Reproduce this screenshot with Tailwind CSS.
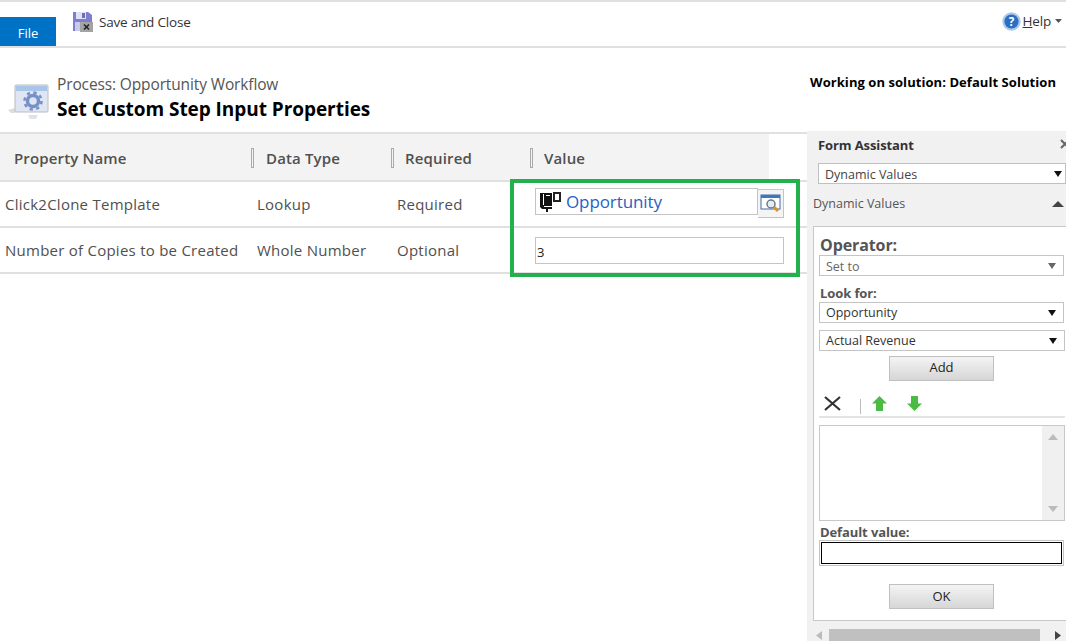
<!DOCTYPE html>
<html>
<head>
<meta charset="utf-8">
<script src="https://cdn.jsdelivr.net/npm/@tailwindcss/browser@4"></script>
</head>
<body class="bg-white">
<div class="relative w-[1066px] h-[641px] overflow-hidden flex flex-col bg-white font-['Open_Sans',sans-serif] text-[#444]">
  <!-- Ribbon -->
  <header class="h-[48px] shrink-0 border-t-2 border-b-2 border-[#e0e0e0] flex items-start relative">
    <div class="mt-[15px] w-[56px] h-[29px] pt-[5px] bg-[#0072c6] text-white text-[13px] flex items-center justify-center">File</div>
    <div class="ml-[17px] mt-[10px] flex items-center gap-[6px]">
      <svg width="20" height="20" viewBox="0 0 20 20"><path d="M0 0h15l4 3v8H9v8H0z" fill="#7f7dd0"/><rect x="3" y="0" width="10" height="7" fill="#dfe2f4"/><rect x="9" y="1" width="3" height="5" fill="#6f6db8"/><rect x="2" y="10" width="7" height="9" fill="#c9c9ea"/><rect x="7" y="10" width="13" height="10" fill="#a3a3a3"/><path d="M11 12.500l5 5m0-5l-5 5" stroke="#222" stroke-width="1.600"/></svg>
      <span class="text-[13.500px] leading-[20px] text-[#333] -mt-[1px] tracking-[-0.2px]">Save and Close</span>
    </div>
    <div class="ml-auto mt-[9px] mr-[4px] flex items-center">
      <svg width="19" height="19" viewBox="0 0 18 18"><circle cx="9" cy="9" r="8.700" fill="#a9c8ea"/><circle cx="9" cy="9" r="6.700" fill="#2a6fc4"/><text x="9" y="13" text-anchor="middle" font-size="11" font-weight="700" fill="#fff" font-family="Open Sans">?</text></svg>
      <span class="ml-[2px] text-[13.500px] leading-[20px] text-[#333] tracking-[-0.2px]"><span class="underline">H</span>elp</span>
      <svg class="ml-[4px]" width="7" height="4" viewBox="0 0 7 4"><path d="M0 0h7L3.500 4z" fill="#555"/></svg>
    </div>
  </header>

  <!-- Page title -->
  <section class="h-[84px] shrink-0 flex items-start relative">
    <svg class="ml-[8px] mt-[36px] shrink-0" width="42" height="36" viewBox="0 0 42 36">
      <path d="M0 26l7-2v5l-4 0z" fill="#ddd"/>
      <rect x="7" y="1" width="33" height="27" rx="1" fill="#dfe5f3" stroke="#b9bcc4"/>
      <rect x="8" y="2" width="31" height="5" fill="#a9c6e8"/>
      <circle cx="25" cy="17" r="5.500" fill="none" stroke="#7690c8" stroke-width="3.500"/>
      <circle cx="25" cy="17" r="8.500" fill="none" stroke="#7690c8" stroke-width="2.500" stroke-dasharray="3.300 3.400"/>
      <path d="M20 31h10l-2 4h-6z" fill="#dde2ee"/>
    </svg>
    <div class="ml-[7px] mt-[25px] flex flex-col">
      <span class="text-[15.500px] leading-[22px] text-[#555] tracking-[-0.13px]">Process: Opportunity Workflow</span>
      <span class="text-[19px] leading-[26px] mt-[1px] font-bold text-black tracking-[-0.05px]">Set Custom Step Input Properties</span>
    </div>
    <span class="ml-auto mr-[10px] mt-[24px] text-[13px] leading-[20px] font-bold text-black tracking-[0.06px]">Working on solution: Default Solution</span>
  </section>

  <!-- Main -->
  <main class="flex-1 flex min-h-0">
    <section class="w-[807px] shrink-0 relative">
      <div class="h-[50px] border-t-2 border-b-2 border-[#e0e0e0]">
        <div class="w-[769px] h-full pt-[2px] bg-[#f3f3f3] grid grid-cols-[251px_140px_139px_239px] items-center text-[15px] font-semibold text-[#505050] tracking-[0.15px]">
          <div class="pl-[14px]">Property Name</div>
          <div class="flex items-center"><i class="block w-[3px] h-[20px] border border-[#aaa] mr-[12px]"></i>Data Type</div>
          <div class="flex items-center"><i class="block w-[3px] h-[20px] border border-[#aaa] mr-[11px]"></i>Required</div>
          <div class="flex items-center"><i class="block w-[3px] h-[20px] border border-[#aaa] mr-[11px]"></i>Value</div>
        </div>
      </div>
      <div class="h-[46px] border-b-2 border-[#e0e0e0] grid grid-cols-[251px_140px_139px_277px] items-center text-[15px] text-[#505050] tracking-[0.25px]">
        <div class="pl-[5px]">Click2Clone Template</div>
        <div class="pl-[6px]">Lookup</div>
        <div class="pl-[6px]">Required</div>
        <div class="pl-[5px] self-start pt-[6px] flex items-start tracking-normal">
          <div class="w-[223px] h-[27px] border border-[#c4c4c4] flex items-center pl-[4px] gap-[5px]">
            <svg width="21" height="20" viewBox="0 0 21 20" class="shrink-0"><path d="M0 1h12v13H4v1h8v2H8v3H6v-3H2l-2-2z" fill="#111"/><rect x="3" y="2" width="1" height="11" fill="#fff"/><rect x="6" y="3" width="4" height="1" fill="#fff"/><rect x="13" y="0" width="8" height="10" fill="#222"/><rect x="15" y="2" width="4" height="6" fill="#fff"/></svg>
            <span class="text-[17px] leading-[24px] text-[#1f62c4] tracking-[-0.1px] pt-[1px]">Opportunity</span>
          </div>
          <div class="w-[26px] h-[29px] mt-[1px] border-r border-b border-t border-[#c4c4c4] flex items-center justify-center bg-[#f4f4f4]">
            <svg width="21" height="21" viewBox="0 0 21 21"><rect x="1" y="2" width="19" height="14" fill="#fff" stroke="#3c6ea8"/><rect x="1" y="2" width="19" height="3" fill="#3c78c0"/><circle cx="11" cy="11" r="4" fill="#e4eef8" stroke="#6a7a8c" stroke-width="1.500"/><path d="M14 14l4 4" stroke="#d89030" stroke-width="3"/></svg>
          </div>
        </div>
      </div>
      <div class="h-[46px] border-b-2 border-[#e0e0e0] grid grid-cols-[251px_140px_139px_277px] items-center text-[15px] text-[#505050] tracking-[0.25px]">
        <div class="pl-[5px] whitespace-nowrap">Number of Copies to be Created</div>
        <div class="pl-[6px]">Whole Number</div>
        <div class="pl-[6px]">Optional</div>
        <div class="pl-[5px] self-start pt-[9px]">
          <div class="w-[249px] h-[27px] border border-[#c4c4c4] flex items-center text-[13px] text-[#222] pl-[1px] pt-[5px] tracking-normal">3</div>
        </div>
      </div>
      <div class="absolute left-[510px] top-[47px] w-[290px] h-[98px] border-4 border-[#22b14c]"></div>
    </section>

    <!-- Form assistant -->
    <aside class="flex-1 min-w-0 bg-[#f1f1f1] relative -mt-[1px] pl-[6px] overflow-hidden">
      <div class="h-[32px] pl-[5px] pb-[2px] flex items-center text-[13px] font-bold text-[#333] whitespace-nowrap tracking-[-0.1px]">Form Assistant
        <svg class="absolute left-[253px] top-[8px]" width="10" height="10" viewBox="0 0 10 10"><path d="M1 1l8 8M9 1L1 9" stroke="#666" stroke-width="2"/></svg>
      </div>
      <div class="ml-[5px] h-[21px] bg-white border border-[#c0c0c0] flex items-center justify-between pl-[6px] pr-[3px] text-[12.500px] text-[#444]">
        <span class="pt-[3px]">Dynamic Values</span>
        <svg width="8" height="8" viewBox="0 0 8 8"><path d="M0 1h8L4 7z" fill="#111"/></svg>
      </div>
      <div class="h-[41px] flex items-center justify-between pr-[2px] pb-[1px] text-[12.500px] text-[#555]">
        <span>Dynamic Values</span>
        <svg width="12" height="6" viewBox="0 0 12 6"><path d="M0 6h12L6 0z" fill="#444"/></svg>
      </div>
      <div class="h-[395px] bg-white border border-[#c8c8c8] border-r-0 pl-[5px] pt-[8px] mt-[1px] flex flex-col">
        <div class="pl-[1px] text-[16px] leading-[20px] font-bold text-[#555] tracking-[-0.1px]">Operator:</div>
        <div class="w-[245px] h-[21px] border border-[#c4c4c4] flex items-center justify-between pl-[6px] pr-[7px] text-[12.500px] text-[#666]">
          <span class="pt-[4px]">Set to</span>
          <svg width="8" height="8" viewBox="0 0 8 8"><path d="M0 1h8L4 7z" fill="#666"/></svg>
        </div>
        <div class="pl-[1px] mt-[9px] text-[13px] leading-[17px] font-bold text-[#555] tracking-[-0.1px]">Look for:</div>
        <div class="w-[245px] h-[21px] border border-[#c4c4c4] flex items-center justify-between pl-[6px] pr-[7px] text-[12.500px] text-[#333]">
          <span class="pt-[2px]">Opportunity</span>
          <svg width="8" height="8" viewBox="0 0 8 8"><path d="M0 1h8L4 7z" fill="#111"/></svg>
        </div>
        <div class="w-[246px] h-[21px] mt-[7px] border border-[#c4c4c4] flex items-center justify-between pl-[6px] pr-[7px] text-[12.500px] text-[#333]">
          <span class="pt-[2px]">Actual Revenue</span>
          <svg width="8" height="8" viewBox="0 0 8 8"><path d="M0 1h8L4 7z" fill="#111"/></svg>
        </div>
        <div class="ml-[70px] mt-[5px] w-[105px] h-[25px] pb-[2px] border border-[#c0c0c0] bg-gradient-to-b from-[#f4f4f4] to-[#d6d6d6] flex items-center justify-center text-[13px] text-[#222]">Add</div>
        <div class="w-[246px] h-[37px] border-b-2 border-[#e4e4e4] flex items-start pt-[15px]">
          <svg class="ml-[5px]" width="17" height="15" viewBox="0 0 17 15"><path d="M1 1l15 13M16 1L1 14" stroke="#333" stroke-width="2.200"/></svg>
          <i class="block w-[1px] h-[15px] bg-[#bbb] ml-[19px] mt-[3px]"></i>
          <svg class="ml-[11px]" width="15" height="15" viewBox="0 0 15 15"><path d="M7.500 0L15 7.500h-4V15H4V7.500H0z" fill="#4cbb44"/></svg>
          <svg class="ml-[20px]" width="15" height="15" viewBox="0 0 15 15"><path d="M7.500 15L15 7.500h-4V0H4v7.500H0z" fill="#4cbb44"/></svg>
        </div>
        <div class="w-[246px] h-[96px] mt-[7px] border border-[#c8c8c8] flex justify-end">
          <div class="w-[22px] h-full bg-[#f0f0f0] flex flex-col items-center justify-between py-[8px]">
            <svg width="10" height="6" viewBox="0 0 10 6"><path d="M0 6h10L5 0z" fill="#bbb"/></svg>
            <svg width="10" height="6" viewBox="0 0 10 6"><path d="M0 0h10L5 6z" fill="#bbb"/></svg>
          </div>
        </div>
        <div class="pl-[1px] mt-[3px] text-[13px] leading-[17px] font-bold text-[#555] tracking-[-0.1px]">Default value:</div>
        <div class="w-[245px] h-[26px] border border-[#c4c4c4] p-[1px] -mt-[1px]"><div class="w-full h-full border border-black bg-white"></div></div>
        <div class="ml-[70px] mt-[18px] w-[105px] h-[25px] border border-[#c0c0c0] bg-gradient-to-b from-[#f4f4f4] to-[#d6d6d6] flex items-center justify-center text-[13px] text-[#222]">OK</div>
      </div>
      <div class="absolute left-[22px] bottom-0 w-[211px] h-[12px] bg-[#c0c0c0]"></div>
      <svg class="absolute left-[9px] bottom-[1px]" width="6" height="9" viewBox="0 0 6 9"><path d="M6 0v9L0 4.500z" fill="#bbb"/></svg>
      <svg class="absolute left-[248px] bottom-[1px]" width="6" height="9" viewBox="0 0 6 9"><path d="M0 0v9l6-4.500z" fill="#444"/></svg>
    </aside>
  </main>
</div>
</body>
</html>
